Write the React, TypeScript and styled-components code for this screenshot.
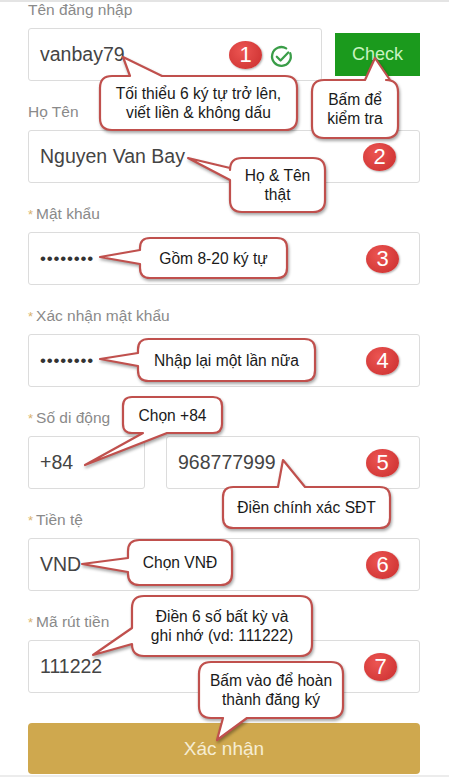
import React from "react"
import styled, { createGlobalStyle } from "styled-components"

type Side = "top" | "bottom" | "left"

type CalloutData = {
  x: number
  y: number
  w: number
  h: number
  side: Side
  base: [number, number]
  tip: [number, number]
  lines: string[]
}

const callouts: CalloutData[] = [
  { x: 100, y: 76, w: 197, h: 54, side: "top", base: [30, 62], tip: [23, -19], lines: ["Tối thiểu 6 ký tự trở lên,", "viết liền & không dấu"] },
  { x: 312, y: 80, w: 86, h: 58, side: "top", base: [53, 78], tip: [63, -22], lines: ["Bấm để", "kiểm tra"] },
  { x: 230, y: 158, w: 95, h: 54, side: "left", base: [10, 22], tip: [-42, 0], lines: ["Họ & Tên", "thật"] },
  { x: 140, y: 238, w: 147, h: 40, side: "left", base: [12, 26], tip: [-40, 19], lines: ["Gồm 8-20 ký tự"] },
  { x: 138, y: 339, w: 177, h: 42, side: "left", base: [14, 27], tip: [-38, 20], lines: ["Nhập lại một lần nữa"] },
  { x: 123, y: 397, w: 99, h: 36, side: "bottom", base: [20, 44], tip: [-38, 68], lines: ["Chọn +84"] },
  { x: 223, y: 487, w: 167, h: 41, side: "top", base: [55, 82], tip: [60, -27], lines: ["Điền chính xác SĐT"] },
  { x: 128, y: 540, w: 104, h: 45, side: "left", base: [18, 32], tip: [-46, 24], lines: ["Chọn VNĐ"] },
  { x: 132, y: 596, w: 180, h: 60, side: "left", base: [32, 48], tip: [-39, 59], lines: ["Điền 6 số bất kỳ và", "ghi nhớ (vd: 111222)"] },
  { x: 199, y: 662, w: 144, h: 56, side: "bottom", base: [24, 48], tip: [18, 78], lines: ["Bấm vào để hoàn", "thành đăng ký"] },
]

// rounded rect with a pointer on one side, local coords
const calloutPath = (c: CalloutData) => {
  const { w, h, side, base, tip } = c
  const r = Math.min(12, h / 4)
  const [b1, b2] = base
  const t = `L${tip[0]},${tip[1]}`
  let d = `M${r},0`
  if (side === "top") d += ` L${b1},0 ${t} L${b2},0`
  d += ` L${w - r},0 Q${w},0 ${w},${r} L${w},${h - r} Q${w},${h} ${w - r},${h}`
  if (side === "bottom") d += ` L${b2},${h} ${t} L${b1},${h}`
  d += ` L${r},${h} Q0,${h} 0,${h - r}`
  if (side === "left") d += ` L0,${b2} ${t} L0,${b1}`
  d += ` L0,${r} Q0,0 ${r},0 Z`
  return d
}

const GlobalStyle = createGlobalStyle`
  html, body {
    margin: 0;
    padding: 0;
    background: #fff;
  }
  body {
    font-family: "Liberation Sans", Arial, sans-serif;
  }
`

const Page = styled.div`
  position: relative;
  width: 449px;
  height: 777px;
  box-sizing: border-box;
  box-shadow: inset 0 2px 0 #e4e4e4;
  border-bottom: 2px solid #ececec;
  padding: 0 29px 0 28px;
  overflow: hidden;
  background: #fff;
`

const Field = styled.div`
  margin-bottom: 21px;
`

const Label = styled.div`
  height: 19px;
  font-size: 15.5px;
  line-height: 19px;
  color: #8a8a8a;
  margin-bottom: 9px;
  white-space: nowrap;
`

const Star = styled.span`
  color: #d9b36e;
  font-size: 13px;
  margin-right: 3px;
`

const Row = styled.div<{ $gap?: number }>`
  display: flex;
  align-items: center;
  gap: ${(p) => p.$gap ?? 0}px;
`

const Input = styled.div<{ $w?: number; $pr?: number }>`
  flex: ${(p) => (p.$w ? `0 0 ${p.$w}px` : "1 1 auto")};
  height: 53px;
  box-sizing: border-box;
  display: flex;
  align-items: center;
  padding: 0 ${(p) => p.$pr ?? 20}px 0 11px;
  border: 1px solid #dcdcdc;
  border-radius: 3px;
  background: #fff;
  font-size: 19.5px;
  color: #444;
`

const Value = styled.span`
  flex: 1;
  white-space: nowrap;
`

const Dots = styled(Value)`
  font-size: 17px;
  letter-spacing: 0.8px;
  color: #333;
`

const Badge = styled.span`
  flex: 0 0 auto;
  width: 33px;
  height: 28px;
  border-radius: 50%;
  background: radial-gradient(circle at 40% 35%, #ec5552, #c92d2d);
  box-shadow: 1px 1px 2px rgba(0, 0, 0, 0.3);
  color: #fff;
  font-size: 22px;
  display: flex;
  align-items: center;
  justify-content: center;
`

const OkIcon = styled.svg`
  flex: 0 0 auto;
  margin-left: 7px;
  margin-top: 3px;
`

const CheckButton = styled.button`
  flex: 0 0 85px;
  height: 43px;
  margin-left: 13px;
  padding: 0;
  border: none;
  background: #1b9a1d;
  color: #c9f3c1;
  font-family: inherit;
  font-size: 18px;
`

const Submit = styled.button`
  display: block;
  width: 100%;
  height: 51px;
  margin-top: 30px;
  padding: 0;
  border: none;
  border-radius: 4px;
  background: #cfa84e;
  color: #f6edd3;
  font-family: inherit;
  font-size: 19px;
`

const Overlay = styled.div`
  position: absolute;
  inset: 0;
  pointer-events: none;
`

const CalloutBox = styled.div<{ $x: number; $y: number; $w: number; $h: number }>`
  position: absolute;
  left: ${(p) => p.$x}px;
  top: ${(p) => p.$y}px;
  width: ${(p) => p.$w}px;
  height: ${(p) => p.$h}px;
  display: flex;
  flex-direction: column;
  align-items: center;
  justify-content: center;
  font-size: 15.6px;
  line-height: 19px;
  color: #1a1a1a;
  text-align: center;
  white-space: nowrap;
`

const CalloutShape = styled.svg`
  position: absolute;
  left: 0;
  top: 0;
  overflow: visible;
  filter: drop-shadow(1.5px 2px 1.5px rgba(0, 0, 0, 0.35));
`

const CalloutLine = styled.div`
  position: relative;
`

const Callout = ({ c }: { c: CalloutData }) => (
  <CalloutBox $x={c.x} $y={c.y} $w={c.w} $h={c.h}>
    <CalloutShape width={c.w} height={c.h}>
      <path d={calloutPath(c)} fill="#fff" stroke="#c0504d" strokeWidth={2.2} strokeLinejoin="round" />
    </CalloutShape>
    {c.lines.map((l) => (
      <CalloutLine key={l}>{l}</CalloutLine>
    ))}
  </CalloutBox>
)

const Required = ({ children }: { children: React.ReactNode }) => (
  <Label>
    <Star>*</Star>
    {children}
  </Label>
)

export default function App() {
  return (
    <>
      <GlobalStyle />
      <Page>
        <Field>
          <Label>Tên đăng nhập</Label>
          <Row>
            <Input $pr={27}>
              <Value>vanbay79</Value>
              <Badge>1</Badge>
              <OkIcon width="25" height="25" viewBox="0 0 24 24" fill="none" stroke="#3a9d48" strokeWidth="2.2" strokeLinecap="round" strokeLinejoin="round">
                <path d="M20.4 8.9 A9 9 0 1 1 16.5 4.2" />
                <path d="M7.5 12.2 l3.6 3.6 l7.4 -7.6" />
              </OkIcon>
            </Input>
            <CheckButton>Check</CheckButton>
          </Row>
        </Field>

        <Field>
          <Label>Họ Tên</Label>
          <Input $pr={23}>
            <Value>Nguyen Van Bay</Value>
            <Badge>2</Badge>
          </Input>
        </Field>

        <Field>
          <Required>Mật khẩu</Required>
          <Input>
            <Dots>••••••••</Dots>
            <Badge>3</Badge>
          </Input>
        </Field>

        <Field>
          <Required>Xác nhận mật khẩu</Required>
          <Input>
            <Dots>••••••••</Dots>
            <Badge>4</Badge>
          </Input>
        </Field>

        <Field>
          <Required>Số di động</Required>
          <Row $gap={21}>
            <Input $w={117}>
              <Value>+84</Value>
            </Input>
            <Input>
              <Value>968777999</Value>
              <Badge>5</Badge>
            </Input>
          </Row>
        </Field>

        <Field>
          <Required>Tiền tệ</Required>
          <Input>
            <Value>VND</Value>
            <Badge>6</Badge>
          </Input>
        </Field>

        <Field>
          <Required>Mã rút tiền</Required>
          <Input $pr={22}>
            <Value>111222</Value>
            <Badge>7</Badge>
          </Input>
        </Field>

        <Submit>Xác nhận</Submit>

        <Overlay>
          {callouts.map((c) => (
            <Callout key={c.lines[0]} c={c} />
          ))}
        </Overlay>
      </Page>
    </>
  )
}
